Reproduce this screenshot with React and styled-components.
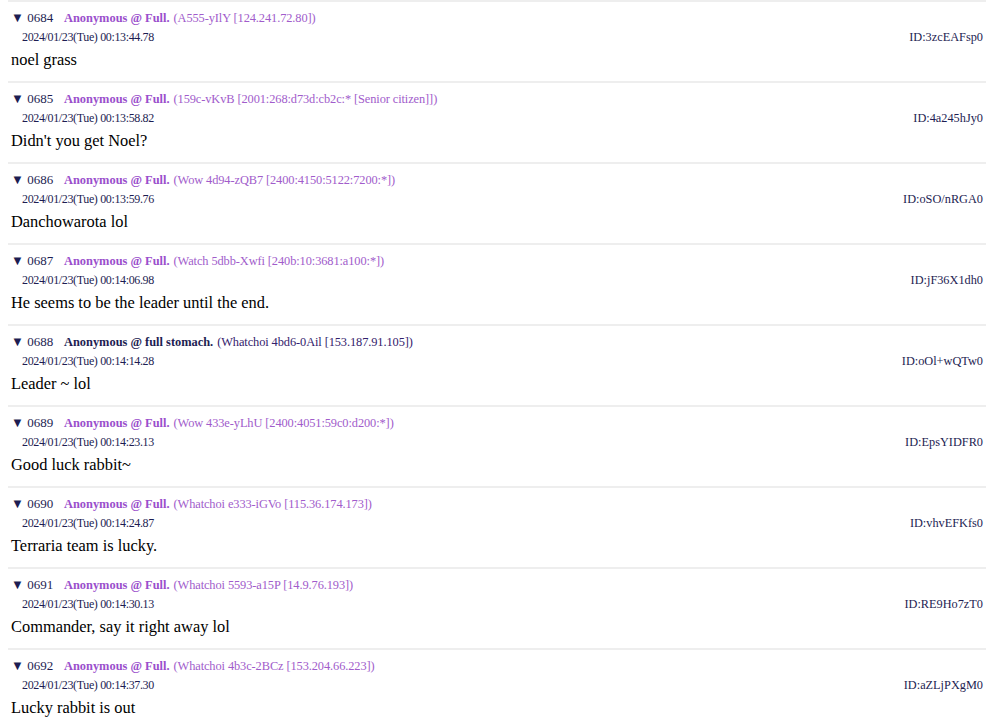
import React from "react";
import styled, { createGlobalStyle } from "styled-components";

const GlobalStyle = createGlobalStyle`
  body {
    margin: 0;
    background: #fff;
    font-family: "Liberation Serif", "Times New Roman", serif;
  }
`;

const Thread = styled.div`
  padding: 0 5px 0 8px;
`;

const Post = styled.div`
  border-top: 2px solid #eeeeee;
  height: 79px;
  padding: 0 3px;
  display: flex;
  flex-direction: column;
`;

const Head = styled.div`
  display: flex;
  align-items: baseline;
  font-size: 12.4px;
  line-height: 16px;
  margin-top: 8px;
  color: #1d1d52;
`;

const Num = styled.span`
  width: 53px;
  flex-shrink: 0;
  font-size: 13px;
`;

const Name = styled.span`
  font-weight: bold;
  color: ${(p) => (p.$plain ? "#1d1d52" : "#9a4fcc")};
`;

const Trip = styled.span`
  margin-left: 4px;
  letter-spacing: -0.1px;
  color: ${(p) => (p.$plain ? "#33216c" : "#a15ccb")};
`;

const Meta = styled.div`
  display: flex;
  justify-content: space-between;
  font-size: 12px;
  line-height: 14px;
  margin-top: 4px;
  padding-left: 11px;
  color: #1d1d52;
`;

const Stamp = styled.span`
  letter-spacing: -0.36px;
`;

const Uid = styled.span`
  font-size: 12.3px;
`;

const Body = styled.div`
  font-size: 16.4px;
  line-height: 20px;
  margin-top: 6px;
  color: #000;
`;

const posts = [
  ["0684", "Anonymous @ Full.", "(A555-yIlY [124.241.72.80])", "2024/01/23(Tue) 00:13:44.78", "ID:3zcEAFsp0", "noel grass"],
  ["0685", "Anonymous @ Full.", "(159c-vKvB [2001:268:d73d:cb2c:* [Senior citizen]])", "2024/01/23(Tue) 00:13:58.82", "ID:4a245hJy0", "Didn't you get Noel?"],
  ["0686", "Anonymous @ Full.", "(Wow 4d94-zQB7 [2400:4150:5122:7200:*])", "2024/01/23(Tue) 00:13:59.76", "ID:oSO/nRGA0", "Danchowarota lol"],
  ["0687", "Anonymous @ Full.", "(Watch 5dbb-Xwfi [240b:10:3681:a100:*])", "2024/01/23(Tue) 00:14:06.98", "ID:jF36X1dh0", "He seems to be the leader until the end."],
  ["0688", "Anonymous @ full stomach.", "(Whatchoi 4bd6-0Ail [153.187.91.105])", "2024/01/23(Tue) 00:14:14.28", "ID:oOl+wQTw0", "Leader ~ lol", true],
  ["0689", "Anonymous @ Full.", "(Wow 433e-yLhU [2400:4051:59c0:d200:*])", "2024/01/23(Tue) 00:14:23.13", "ID:EpsYIDFR0", "Good luck rabbit~"],
  ["0690", "Anonymous @ Full.", "(Whatchoi e333-iGVo [115.36.174.173])", "2024/01/23(Tue) 00:14:24.87", "ID:vhvEFKfs0", "Terraria team is lucky."],
  ["0691", "Anonymous @ Full.", "(Whatchoi 5593-a15P [14.9.76.193])", "2024/01/23(Tue) 00:14:30.13", "ID:RE9Ho7zT0", "Commander, say it right away lol"],
  ["0692", "Anonymous @ Full.", "(Whatchoi 4b3c-2BCz [153.204.66.223])", "2024/01/23(Tue) 00:14:37.30", "ID:aZLjPXgM0", "Lucky rabbit is out"],
];

export default function App() {
  return (
    <>
      <GlobalStyle />
      <Thread>
        {posts.map(([num, name, trip, date, id, text, plain]) => (
          <Post key={num}>
            <Head>
              <Num>▼ {num}</Num>
              <Name $plain={plain}>{name}</Name>
              <Trip $plain={plain}>{trip}</Trip>
            </Head>
            <Meta>
              <Stamp>{date}</Stamp>
              <Uid>{id}</Uid>
            </Meta>
            <Body>{text}</Body>
          </Post>
        ))}
      </Thread>
    </>
  );
}
